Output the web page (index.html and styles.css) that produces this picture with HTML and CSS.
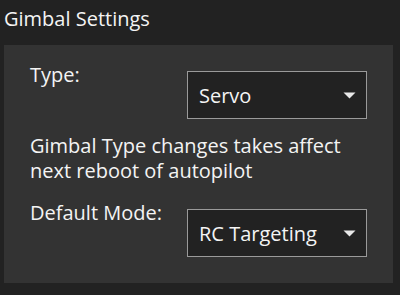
FILE: index.html
```html
<!DOCTYPE html>
<html lang="en">
<head>
  <meta charset="UTF-8" />
  <title>Gimbal Settings</title>
  <link rel="stylesheet" href="styles.css">
</head>
<body>
  <div class="title">Gimbal Settings</div>
  <div class="panel">
    <div class="row">
      <div class="label">Type:</div>
      <div class="select">
        <span>Servo</span>
        <svg class="arrow" width="13" height="7" viewBox="0 0 13 7"><path d="M0.5 0.5 H12.5 L6.5 6.5 Z" fill="#e8e8e8"/></svg>
      </div>
    </div>
    <div class="note">Gimbal Type changes takes affect next reboot of autopilot</div>
    <div class="row">
      <div class="label">Default Mode:</div>
      <div class="select">
        <span>RC Targeting</span>
        <svg class="arrow" width="13" height="7" viewBox="0 0 13 7"><path d="M0.5 0.5 H12.5 L6.5 6.5 Z" fill="#e8e8e8"/></svg>
      </div>
    </div>
  </div>
</body>
</html>
```

FILE: styles.css
```css
body {
  margin: 0;
  background: #222222;
  color: #f4f4f4;
  font-family: 'Open Sans', 'Noto Sans', sans-serif;
  font-size: 20px;
  width: 400px;
  height: 295px;
  overflow: hidden;
}

.title {
  height: 45px;
  padding-left: 4px;
  line-height: 38px;
}

.panel {
  margin: 0 7px 0 4px;
  background: #333333;
  padding: 18px 26px 26px 26px;
}

.row {
  display: grid;
  grid-template-columns: 157px 180px;
  align-items: start;
}

.label {
  line-height: 24px;
}

.select {
  margin-top: 8px;
  height: 46px;
  border: 1px solid #9a9a9a;
  background: #222222;
  display: flex;
  align-items: center;
  justify-content: space-between;
  padding: 0 10px 0 11px;
}

.arrow {
  display: block;
}

.note {
  margin: 14px 0 18px;
  line-height: 25px;
}
```
